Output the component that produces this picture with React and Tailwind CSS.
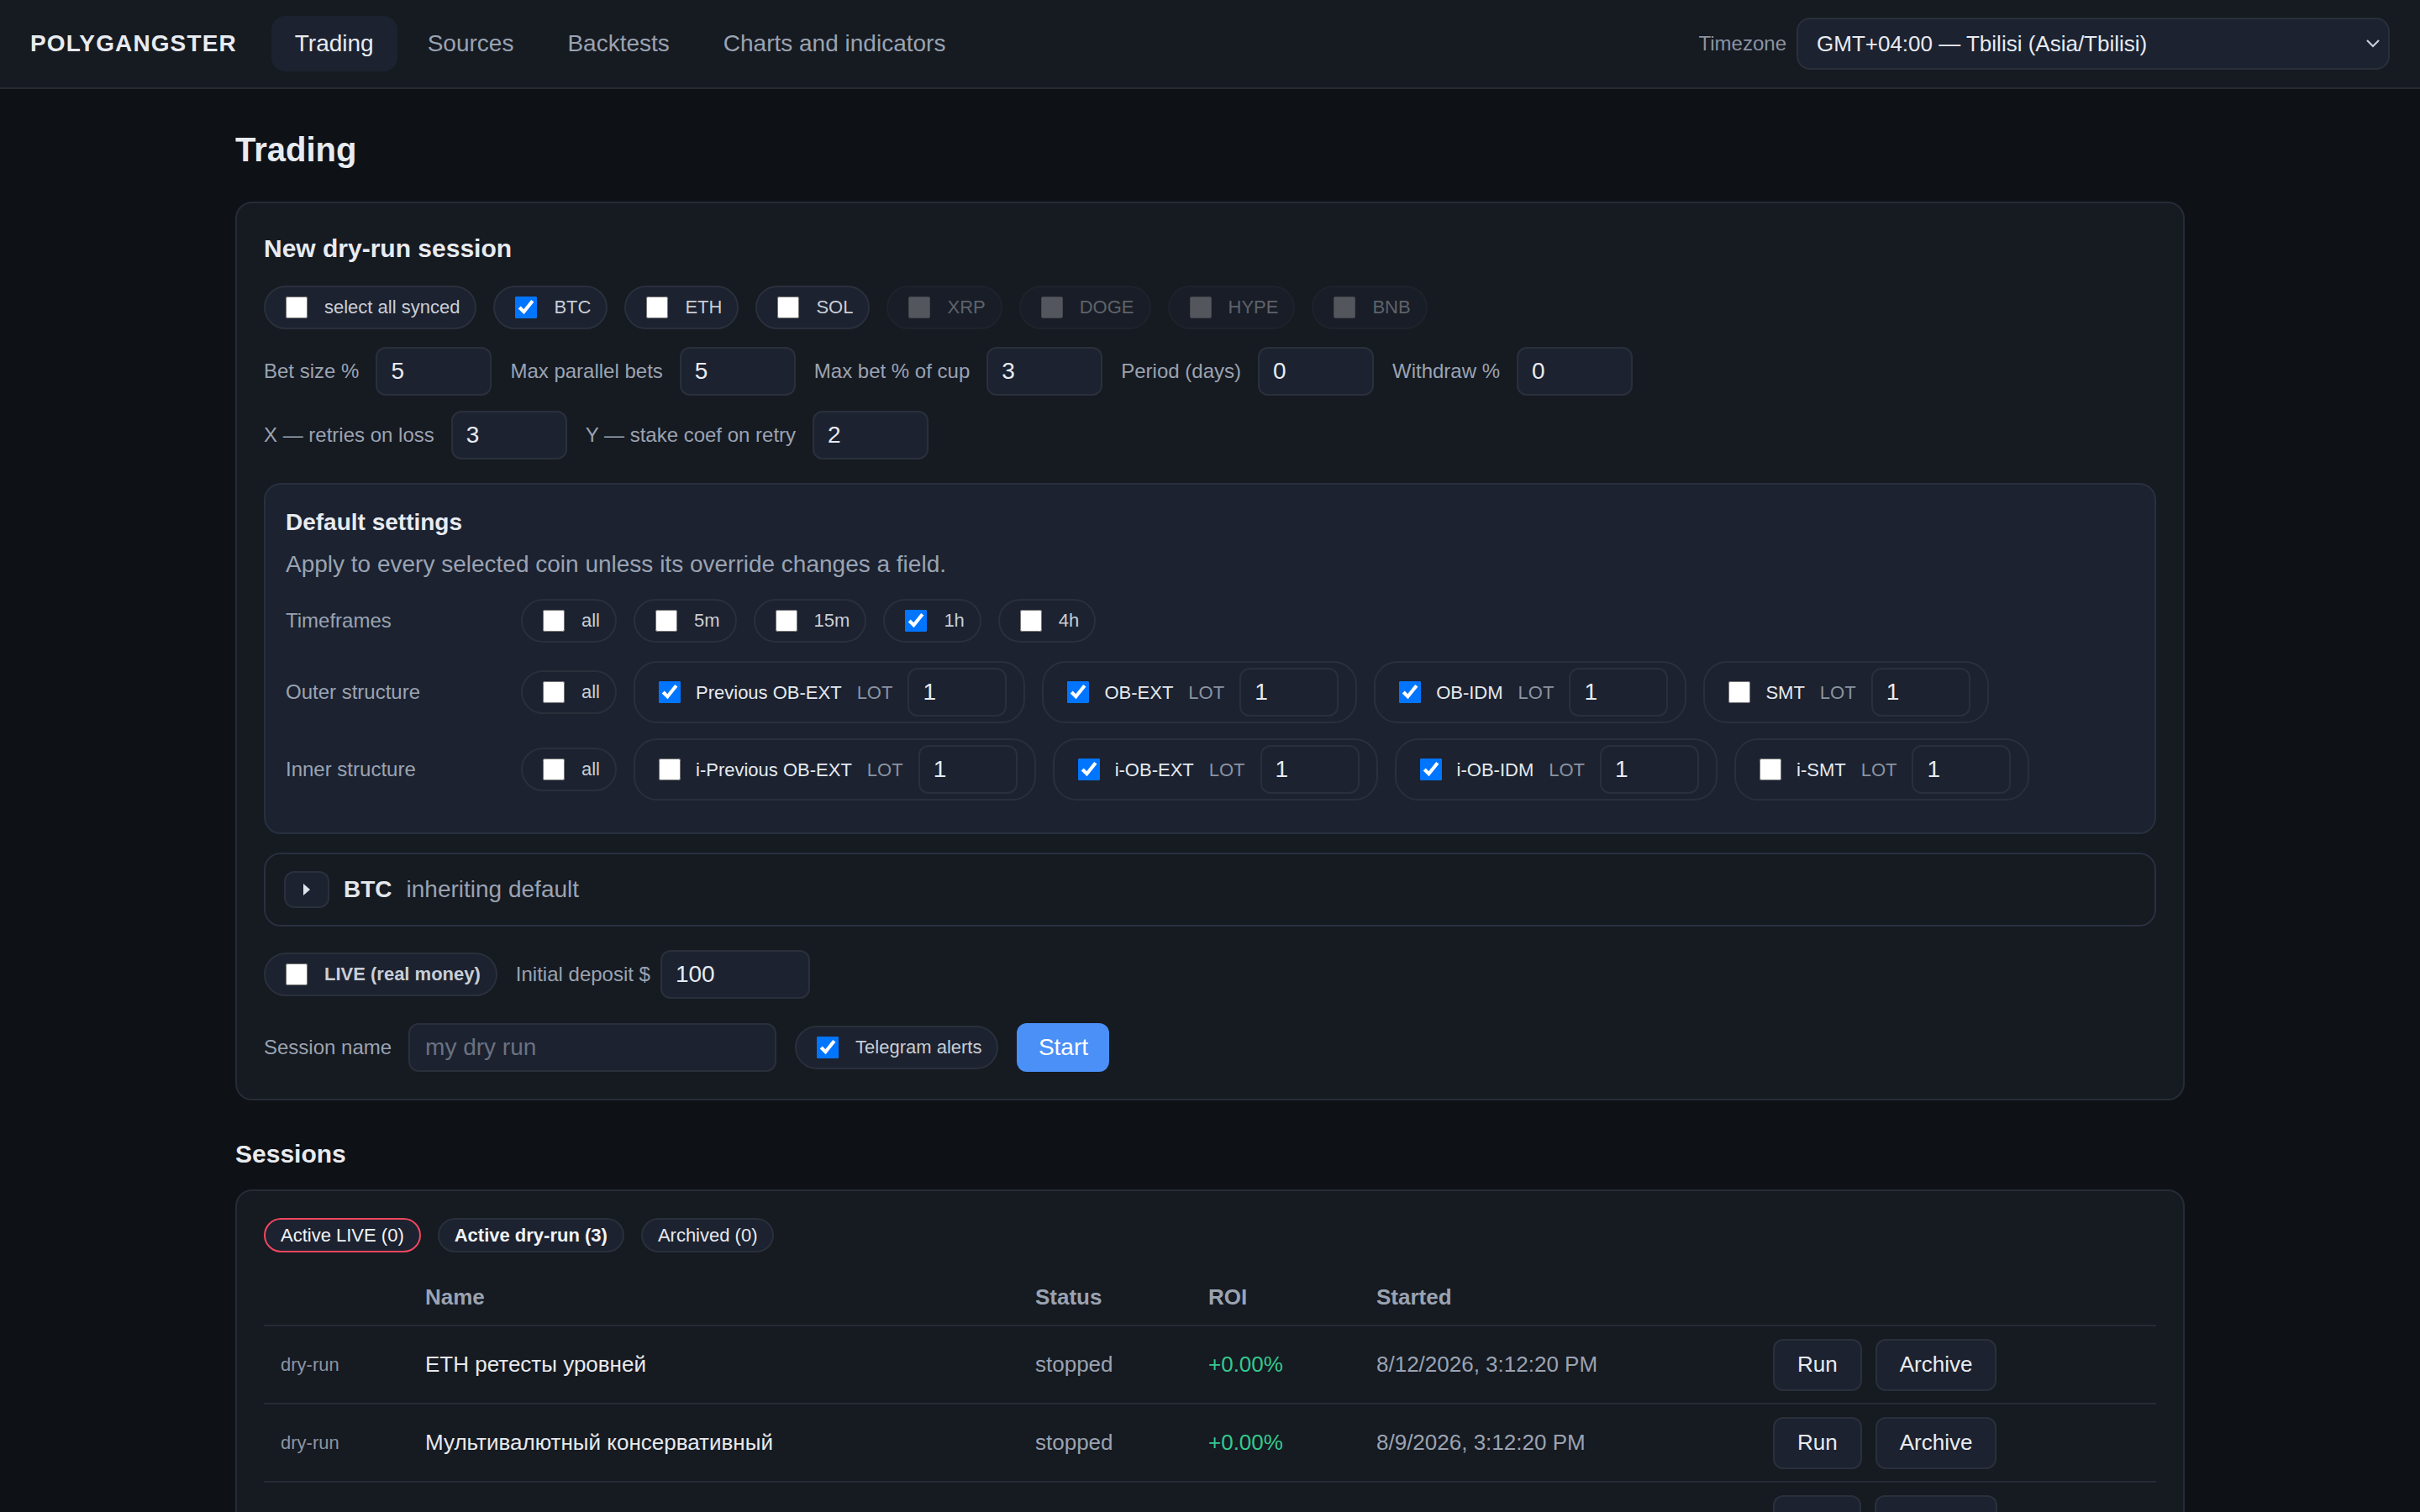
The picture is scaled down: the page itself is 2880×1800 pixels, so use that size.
import React from "react";

const FONT = "font-['Liberation_Sans',Arial,Helvetica,sans-serif]";

function Check({ checked, disabled }) {
  return (
    <input
      type="checkbox"
      defaultChecked={checked}
      disabled={disabled}
      className="m-0 h-[26px] w-[26px] shrink-0"
    />
  );
}

function Pill({ label, checked, disabled, bold }) {
  return (
    <label
      className={
        "inline-flex h-[52px] shrink-0 items-center gap-5 rounded-full border-2 border-[#2a303b] bg-[#1c2230] pl-6 pr-[18px] text-[22px] leading-none text-[#c9ced6] " +
        (disabled ? "opacity-40" : "") +
        (bold ? " font-bold" : "")
      }
    >
      <Check checked={checked} disabled={disabled} />
      <span className="whitespace-nowrap">{label}</span>
    </label>
  );
}

function Field({ label, value, w = "w-[138px]" }) {
  return (
    <div className="flex items-center gap-5">
      <span className="whitespace-nowrap text-[24px] text-[#9aa3b2]">{label}</span>
      <input
        defaultValue={value}
        className={
          "h-[58px] rounded-xl border-2 border-[#2a303b] bg-[#1c2230] px-4 text-[28px] text-[#e8ebf0] outline-none " +
          w
        }
      />
    </div>
  );
}

function Group({ name, checked }) {
  return (
    <div className="inline-flex h-[74px] shrink-0 items-center gap-[18px] rounded-[28px] border-2 border-[#2a303b] pl-[28px] pr-[20px]">
      <Check checked={checked} />
      <span className="whitespace-nowrap text-[22px] text-[#e6e9ee]">{name}</span>
      <span className="text-[22px] text-[#8b93a1]">LOT</span>
      <input
        defaultValue="1"
        className="h-[58px] w-[118px] rounded-xl border-2 border-[#2a303b] bg-[#1c2230] px-4 text-[28px] text-[#e8ebf0] outline-none"
      />
    </div>
  );
}

function Row({ label, children, tall }) {
  return (
    <div className={"flex items-center gap-5 " + (tall ? "h-[74px]" : "h-[60px]")}>
      <div className="w-[260px] shrink-0 text-[24px] text-[#9aa3b2]">{label}</div>
      {children}
    </div>
  );
}

function Actions() {
  return (
    <div className="flex gap-4 px-5">
      <button className="h-[62px] rounded-xl border-2 border-[#2a303b] bg-[#1c2230] px-[27px] text-[26px] text-[#e8ebf0]">
        Run
      </button>
      <button className="h-[62px] rounded-xl border-2 border-[#2a303b] bg-[#1c2230] px-[27px] text-[26px] text-[#e8ebf0]">
        Archive
      </button>
    </div>
  );
}

function SessionRow({ name, date }) {
  return (
    <div className="grid h-[93px] grid-cols-[172px_726px_206px_200px_472px_1fr] items-center border-b-2 border-[#262c36] text-[26px]">
      <div className="px-5 text-[22px] text-[#8b93a1]">dry-run</div>
      <div className="px-5 text-[#e6e9ee]">{name}</div>
      <div className="px-5 text-[#9aa3b2]">stopped</div>
      <div className="px-5 text-[#34c98e]">+0.00%</div>
      <div className="px-5 text-[#9aa3b2]">{date}</div>
      <Actions />
    </div>
  );
}

export default function App() {
  return (
    <div className={"min-h-screen bg-[#0e1116] text-[#e8ebf0] " + FONT}>
      {/* Header */}
      <header className="flex h-[106px] items-center border-b-2 border-[#262b33] bg-[#161a21] px-[36px]">
        <div className="text-[28px] font-bold tracking-[0.04em] text-[#e8ebf0]">POLYGANGSTER</div>
        <nav className="ml-[41px] flex gap-2">
          <a className="rounded-2xl bg-[#1c2230] px-7 py-4 text-[28px] leading-[34px] text-[#e8ebf0]">Trading</a>
          <a className="rounded-2xl px-7 py-4 text-[28px] leading-[34px] text-[#9aa3b2]">Sources</a>
          <a className="rounded-2xl px-7 py-4 text-[28px] leading-[34px] text-[#9aa3b2]">Backtests</a>
          <a className="rounded-2xl px-7 py-4 text-[28px] leading-[34px] text-[#9aa3b2]">Charts and indicators</a>
        </nav>
        <div className="ml-auto flex items-center gap-3">
          <span className="text-[24px] text-[#8b93a1]">Timezone</span>
          <div className="relative">
            <select className="h-[62px] w-[706px] appearance-none rounded-2xl border-2 border-[#2a303a] bg-[#1c2230] pl-[22px] text-[26px] text-[#e8ebf0] outline-none">
              <option>GMT+04:00 — Tbilisi (Asia/Tbilisi)</option>
            </select>
            <svg
              className="pointer-events-none absolute right-[10px] top-[24px]"
              width="20"
              height="14"
              viewBox="0 0 10 7"
              fill="none"
            >
              <polyline points="1.5,1.5 5,5 8.5,1.5" stroke="#c9ced6" strokeWidth="1.1" />
            </svg>
          </div>
        </div>
      </header>

      <main className="mx-auto max-w-[2320px] pt-12">
        <h1 className="mb-[38px] text-[40px] font-bold leading-[48px] text-[#e8ebf0]">Trading</h1>

        {/* New session card */}
        <section className="rounded-[20px] border-2 border-[#262c36] bg-[#161a21] p-8">
          <h2 className="text-[30px] font-bold leading-[44px] text-[#e8ebf0]">New dry-run session</h2>

          <div className="mt-[22px] flex flex-wrap gap-5">
            <Pill label="select all synced" />
            <Pill label="BTC" checked />
            <Pill label="ETH" />
            <Pill label="SOL" />
            <Pill label="XRP" disabled />
            <Pill label="DOGE" disabled />
            <Pill label="HYPE" disabled />
            <Pill label="BNB" disabled />
          </div>

          <div className="mt-[21px] flex items-center gap-[22px]">
            <Field label="Bet size %" value="5" />
            <Field label="Max parallel bets" value="5" />
            <Field label="Max bet % of cup" value="3" />
            <Field label="Period (days)" value="0" />
            <Field label="Withdraw %" value="0" />
          </div>

          <div className="mt-[18px] flex items-center gap-[22px]">
            <Field label="X — retries on loss" value="3" />
            <Field label="Y — stake coef on retry" value="2" />
          </div>

          {/* Default settings */}
          <div className="mt-[28px] rounded-[20px] border-2 border-[#283040] bg-[#1c2230] px-6 pb-[38px] pt-6">
            <div className="text-[28px] font-bold leading-[42px] text-[#e8ebf0]">Default settings</div>
            <div className="mt-2 text-[28px] leading-[42px] text-[#9aa3b2]">
              Apply to every selected coin unless its override changes a field.
            </div>
            <div className="mt-4 flex flex-col gap-[18px]">
              <Row label="Timeframes">
                <div className="flex gap-5">
                  <Pill label="all" />
                  <Pill label="5m" />
                  <Pill label="15m" />
                  <Pill label="1h" checked />
                  <Pill label="4h" />
                </div>
              </Row>
              <Row label="Outer structure" tall>
                <div className="flex items-center gap-5">
                  <Pill label="all" />
                  <Group name="Previous OB-EXT" checked />
                  <Group name="OB-EXT" checked />
                  <Group name="OB-IDM" checked />
                  <Group name="SMT" />
                </div>
              </Row>
              <Row label="Inner structure" tall>
                <div className="flex items-center gap-5">
                  <Pill label="all" />
                  <Group name="i-Previous OB-EXT" />
                  <Group name="i-OB-EXT" checked />
                  <Group name="i-OB-IDM" checked />
                  <Group name="i-SMT" />
                </div>
              </Row>
            </div>
          </div>

          {/* BTC override */}
          <div className="mt-[22px] flex h-[88px] items-center gap-[17px] rounded-[20px] border-2 border-[#283040] pl-[22px]">
            <button className="flex h-[44px] w-[54px] items-center justify-center rounded-xl border-2 border-[#2a303b] bg-[#1c2230]">
              <svg width="10" height="16" viewBox="0 0 5 8">
                <polygon points="0.5,0.5 4.5,4 0.5,7.5" fill="#dfe3ea" />
              </svg>
            </button>
            <span className="text-[28px] font-bold text-[#e2e6ec]">BTC</span>
            <span className="text-[28px] text-[#9aa3b2]">inheriting default</span>
          </div>

          {/* Live row */}
          <div className="mt-[28px] flex items-center gap-[22px]">
            <Pill label="LIVE (real money)" bold />
            <div className="flex items-center gap-3">
              <span className="text-[24px] text-[#9aa3b2]">Initial deposit $</span>
              <input
                defaultValue="100"
                className="h-[58px] w-[178px] rounded-xl border-2 border-[#2a303b] bg-[#1c2230] px-4 text-[28px] text-[#e8ebf0] outline-none"
              />
            </div>
          </div>

          {/* Session row */}
          <div className="mt-[29px] flex items-center gap-[22px]">
            <div className="flex items-center gap-5">
              <span className="text-[24px] text-[#9aa3b2]">Session name</span>
              <input
                placeholder="my dry run"
                className="h-[58px] w-[438px] rounded-xl border-2 border-[#2a303b] bg-[#1c2230] px-[18px] text-[28px] text-[#e8ebf0] outline-none placeholder:text-[#6b7280]"
              />
            </div>
            <Pill label="Telegram alerts" checked />
            <button className="h-[58px] w-[110px] rounded-xl bg-[#4a90f7] text-[28px] text-white">Start</button>
          </div>
        </section>

        {/* Sessions */}
        <h2 className="mb-[20px] mt-[42px] text-[30px] font-bold leading-[44px] text-[#e8ebf0]">Sessions</h2>
        <section className="rounded-[20px] border-2 border-[#262c36] bg-[#161a21] p-8">
          <div className="flex gap-5">
            <button className="h-[41px] rounded-full border-2 border-[#f0475e] bg-[#1c2230] px-[18px] text-[22px] text-[#f1f3f6]">
              Active LIVE (0)
            </button>
            <button className="h-[41px] rounded-full border-2 border-[#2a303b] bg-[#1c2230] px-[18px] text-[22px] font-bold text-[#f1f3f6]">
              Active dry-run (3)
            </button>
            <button className="h-[41px] rounded-full border-2 border-[#2a303b] bg-[#1c2230] px-[18px] text-[22px] text-[#e6e9ee]">
              Archived (0)
            </button>
          </div>

          <div className="mt-5">
            <div className="grid h-[68px] grid-cols-[172px_726px_206px_200px_472px_1fr] items-center border-b-2 border-[#262c36] text-[26px] font-bold text-[#9aa3b2]">
              <div className="px-5"></div>
              <div className="px-5">Name</div>
              <div className="px-5">Status</div>
              <div className="px-5">ROI</div>
              <div className="px-5">Started</div>
              <div className="px-5"></div>
            </div>
            <SessionRow name="ETH ретесты уровней" date="8/12/2026, 3:12:20 PM" />
            <SessionRow name="Мультивалютный консервативный" date="8/9/2026, 3:12:20 PM" />
            <div className="grid h-[93px] grid-cols-[172px_726px_206px_200px_472px_1fr] items-center border-b-2 border-[#262c36]">
              <div></div>
              <div></div>
              <div></div>
              <div></div>
              <div></div>
              <div className="flex gap-4 px-5">
                <div className="h-[62px] w-[105px] rounded-xl border-2 border-[#2a303b] bg-[#1c2230]"></div>
                <div className="h-[62px] w-[146px] rounded-xl border-2 border-[#2a303b] bg-[#1c2230]"></div>
              </div>
            </div>
          </div>
        </section>
        <div className="h-16" />
      </main>
    </div>
  );
}
